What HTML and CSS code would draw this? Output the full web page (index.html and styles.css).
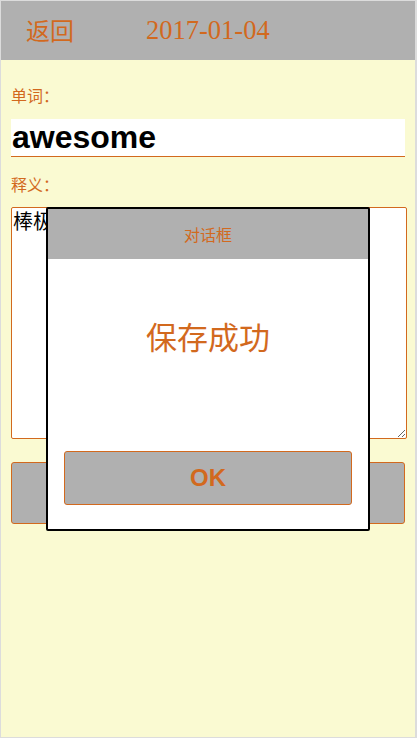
FILE: index.html
```html
<!DOCTYPE html>
<html lang="zh">
<head>
<meta charset="utf-8">
<title>单词</title>
<link rel="stylesheet" href="styles.css">
</head>
<body>
<div class="page">
  <header class="topbar">
    <span class="back">返回</span>
    <span class="date">2017-01-04</span>
  </header>
  <main class="form">
    <div class="label">单词：</div>
    <input class="word" type="text" value="awesome">
    <div class="label label-meaning">释义：</div>
    <textarea class="meaning">棒极了</textarea>
    <button class="save" type="button" aria-label="保存"></button>
  </main>
  <div class="overlay">
    <div class="dialog">
      <div class="dialog-title">对话框</div>
      <div class="dialog-message">保存成功</div>
      <button class="dialog-ok" type="button">OK</button>
    </div>
  </div>
</div>
</body>
</html>
```

FILE: styles.css
```css
* {
  box-sizing: border-box;
}

html, body {
  margin: 0;
  padding: 0;
}

body {
  font-family: "Noto Sans CJK SC", "Liberation Sans", sans-serif;
  color: #d2691e;
}

.page {
  min-height: 738px;
  background: #fafad2;
  border-top: 1px solid #dcdcdc;
  border-left: 1px solid #dcdcdc;
  border-right: 2px solid #dcdcdc;
  border-bottom: 1px solid #dcdcdc;
}

.topbar {
  height: 59px;
  background: #b0b0b0;
  display: flex;
  align-items: center;
  padding-left: 25px;
  padding-bottom: 2px;
}

.back {
  font-family: "Noto Sans CJK SC", sans-serif;
  font-size: 24px;
  line-height: 30px;
  width: 120px;
}

.date {
  font-family: "Liberation Serif", "Noto Sans CJK SC", serif;
  font-size: 26.5px;
  line-height: 30px;
}

.form {
  padding: 24px 0 0 10px;
  display: flex;
  flex-direction: column;
  align-items: flex-start;
}

.label {
  font-size: 16px;
  line-height: 22px;
}

.word {
  margin-top: 13px;
  width: 394px;
  height: 38px;
  border: 0;
  border-bottom: 1px solid #d2691e;
  border-radius: 0;
  background: #ffffff;
  padding: 0 0 0 1px;
  font-family: "Liberation Sans", Arial, sans-serif;
  font-weight: bold;
  font-size: 32px;
  color: #000000;
  outline: none;
}

.label-meaning {
  margin-top: 16px;
}

.meaning {
  margin-top: 12px;
  width: 396px;
  height: 232px;
  border: 1px solid #d2691e;
  border-radius: 2px;
  background: #ffffff;
  padding: 1px;
  font-family: "Noto Sans CJK SC", sans-serif;
  font-size: 20px;
  line-height: 24px;
  color: #000000;
  resize: vertical;
  outline: none;
}

.save {
  margin-top: 23px;
  width: 394px;
  height: 62px;
  border: 1px solid #d2691e;
  border-radius: 3px;
  background: #b0b0b0;
  font-family: "Noto Sans CJK SC", sans-serif;
  font-size: 22px;
  font-weight: bold;
  color: #d2691e;
}

.overlay {
  position: fixed;
  inset: 0;
  display: flex;
  align-items: center;
  justify-content: center;
  padding-right: 1px;
}

.dialog {
  width: 324px;
  height: 324px;
  border: 2px solid #000000;
  border-radius: 2px;
  background: #ffffff;
  display: flex;
  flex-direction: column;
  margin-bottom: 1px;
}

.dialog-title {
  height: 50px;
  background: #b0b0b0;
  display: flex;
  align-items: center;
  justify-content: center;
  font-size: 16px;
}

.dialog-message {
  margin-top: 57px;
  text-align: center;
  font-size: 31px;
  line-height: 40px;
}

.dialog-ok {
  margin: 95px 16px 0 16px;
  height: 54px;
  border: 1px solid #d2691e;
  border-radius: 3px;
  background: #b0b0b0;
  font-family: "Liberation Sans", Arial, sans-serif;
  font-size: 24px;
  font-weight: bold;
  color: #d2691e;
}
```
